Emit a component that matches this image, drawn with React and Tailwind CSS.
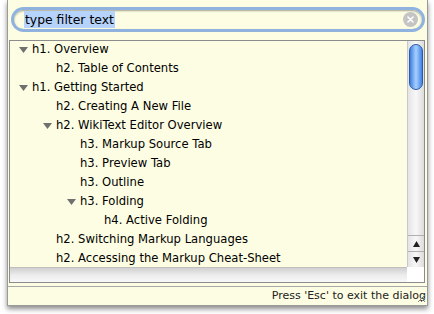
import React from 'react';

const items = [
    { level: 0, text: 'h1. Overview', open: true },
    { level: 1, text: 'h2. Table of Contents' },
    { level: 0, text: 'h1. Getting Started', open: true },
    { level: 1, text: 'h2. Creating A New File' },
    { level: 1, text: 'h2. WikiText Editor Overview', open: true },
    { level: 2, text: 'h3. Markup Source Tab' },
    { level: 2, text: 'h3. Preview Tab' },
    { level: 2, text: 'h3. Outline' },
    { level: 2, text: 'h3. Folding', open: true },
    { level: 3, text: 'h4. Active Folding' },
    { level: 1, text: 'h2. Switching Markup Languages' },
    { level: 1, text: 'h2. Accessing the Markup Cheat-Sheet' },
];

// indent per level is 24px, text column starts at 22px
const INDENT = ['pl-[22px]', 'pl-[46px]', 'pl-[70px]', 'pl-[94px]'];

const Triangle = () => (
    <svg width="9" height="8" viewBox="0 0 9 8" className="mr-[4px]">
        <path d="M0 1 L9 1 L4.5 7 Z" fill="#707070" />
    </svg>
);

const TreeRow = ({ item }) => (
    <div className={`h-[19px] flex items-center ${INDENT[item.level]}`}>
        {item.open ? (
            <span className="-ml-[13px] flex items-center"><Triangle /></span>
        ) : null}
        <span className="text-[11.6px] text-black whitespace-nowrap">{item.text}</span>
    </div>
);

const VScrollbar = () => (
    <div className="flex-1 w-[17px] flex flex-col bg-gradient-to-r from-[#e4e4e4] via-[#f8f8f8] to-[#dcdcdc] border-l border-[#c8c8c8]">
        <div className="flex-1 pt-[3px] px-[1px]">
            <div className="h-[46px] rounded-full border border-[#2c5aa8] bg-gradient-to-r from-[#3d7fe0] via-[#a8d0ff] to-[#3f82e3]" />
        </div>
        <div className="h-[16px] flex items-center justify-center border-t border-[#b0b0b0]">
            <svg width="7" height="6" viewBox="0 0 7 6"><path d="M3.5 0 L7 6 L0 6 Z" fill="#222" /></svg>
        </div>
        <div className="h-[16px] flex items-center justify-center border-t border-[#b0b0b0]">
            <svg width="7" height="6" viewBox="0 0 7 6"><path d="M0 0 L7 0 L3.5 6 Z" fill="#222" /></svg>
        </div>
    </div>
);

export default function App() {
    return (
        <div className="w-[434px] h-[314px] bg-white" style={{ fontFamily: '"DejaVu Sans", sans-serif' }}>
            <div className="ml-[7px] w-[421px] h-[306px] bg-[#fdfde3] border-x border-b border-[#9a9a9a] shadow-[0_3px_5px_rgba(0,0,0,0.45)] flex flex-col">
                {/* filter field */}
                <div className="pt-[7px] pl-[3px] pr-[2px]">
                    <div className="h-[25px] rounded-full border-[3px] border-[#8fb3de] bg-[#fdfde3] flex items-center pl-[10px] pr-[4px] shadow-[inset_0_1px_2px_rgba(0,0,0,0.35)]">
                        <span className="bg-[#b5d3fb] text-[12.4px] leading-[17px] text-black px-[1px]">type filter text</span>
                        <div className="flex-1" />
                        <div className="w-[15px] h-[15px] rounded-full bg-[#c4c4c4] flex items-center justify-center">
                            <svg width="7" height="7" viewBox="0 0 7 7">
                                <path d="M1 1 L6 6 M6 1 L1 6" stroke="#fff" strokeWidth="1.6" strokeLinecap="round" />
                            </svg>
                        </div>
                    </div>
                </div>

                {/* outline tree */}
                <div className="mt-[8px] ml-[1px] mr-[2px] h-[243px] border border-[#8c8c8c] flex">
                    <div className="flex-1 flex flex-col min-w-0">
                        <div className="flex-1 overflow-hidden -mt-[1px]">
                            {items.map((item, i) => (
                                <TreeRow key={i} item={item} />
                            ))}
                        </div>
                        <div className="h-[15px] bg-gradient-to-b from-[#d0d0d0] via-[#ececec] to-[#f8f8f8] border-t border-[#c0c0c0]" />
                    </div>
                    <div className="flex flex-col">
                        <VScrollbar />
                        <div className="h-[15px] w-[17px] bg-white" />
                    </div>
                </div>

                {/* status line */}
                <div className="mt-[3px] flex-1 border-t border-[#a8a8a8] flex items-center justify-end pr-[1px] relative">
                    <span className="text-[11px] text-[#222]">Press 'Esc' to exit the dialog</span>
                    <svg width="10" height="10" viewBox="0 0 10 10" className="absolute right-[1px] bottom-[2px]">
                        <path d="M9 2 L2 9 M9 5 L5 9 M9 8 L8 9" stroke="#808080" strokeWidth="1" />
                    </svg>
                </div>
            </div>
        </div>
    );
}
